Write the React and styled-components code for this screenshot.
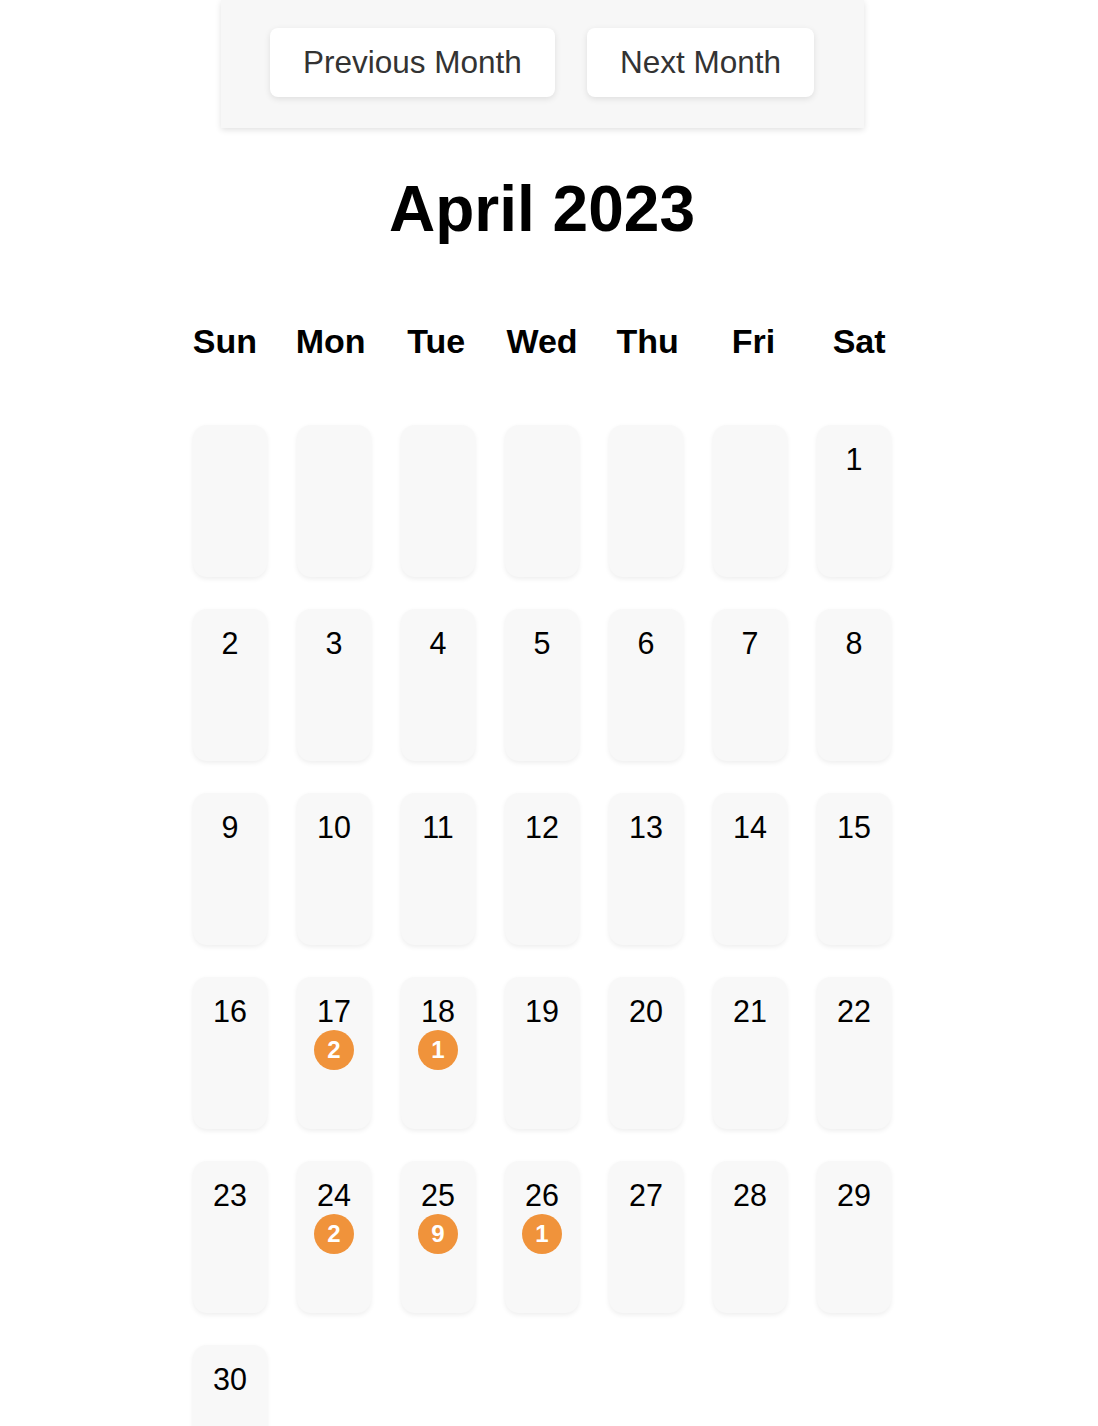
import React from "react";
import styled, { createGlobalStyle } from "styled-components";

const GlobalStyle = createGlobalStyle`
  html, body {
    margin: 0;
    padding: 0;
    background: #ffffff;
    font-family: "Liberation Sans", Arial, Helvetica, sans-serif;
    color: #000;
  }
`;

const WEEKDAYS = ["Sun", "Mon", "Tue", "Wed", "Thu", "Fri", "Sat"];
const START_OFFSET = 6;
const DAYS_IN_MONTH = 30;
const EVENTS = { 17: 2, 18: 1, 24: 2, 25: 9, 26: 1 };

const App = () => {
  const slots = [];
  for (let i = 0; i < START_OFFSET; i++) slots.push(null);
  for (let d = 1; d <= DAYS_IN_MONTH; d++) slots.push(d);

  return (
    <Page>
      <GlobalStyle />
      <Toolbar>
        <NavButton>Previous Month</NavButton>
        <NavButton>Next Month</NavButton>
      </Toolbar>
      <Title>April 2023</Title>
      <Weekdays>
        {WEEKDAYS.map((w) => (
          <Weekday key={w}>{w}</Weekday>
        ))}
      </Weekdays>
      <Grid>
        {slots.map((day, i) => (
          <Cell key={i}>
            {day && <DayNumber>{day}</DayNumber>}
            {day && EVENTS[day] && <Badge>{EVENTS[day]}</Badge>}
          </Cell>
        ))}
      </Grid>
    </Page>
  );
};

export default App;

const Page = styled.div`
  width: 1084px;
  display: flex;
  flex-direction: column;
  align-items: center;
  padding-bottom: 40px;
`;

const Toolbar = styled.div`
  width: 643px;
  box-sizing: border-box;
  height: 128px;
  padding-top: 28px;
  display: flex;
  justify-content: center;
  align-items: flex-start;
  gap: 32px;
  background: #f7f7f7;
  box-shadow: 0 2px 6px rgba(0, 0, 0, 0.12);
`;

const NavButton = styled.button`
  height: 69px;
  padding: 0 33px;
  border: none;
  border-radius: 8px;
  background: #ffffff;
  color: #333333;
  font-family: "Liberation Sans", Arial, Helvetica, sans-serif;
  font-size: 31.5px;
  box-shadow: 0 2px 6px rgba(0, 0, 0, 0.1);
  cursor: pointer;
`;

const Title = styled.h1`
  margin: 47px 0 0;
  font-size: 64px;
  line-height: 68px;
  font-weight: 700;
  text-align: center;
`;

const Weekdays = styled.div`
  margin-top: 78px;
  width: 740px;
  display: grid;
  grid-template-columns: repeat(7, 1fr);
`;

const Weekday = styled.div`
  text-align: center;
  font-size: 34px;
  font-weight: 700;
  line-height: 40px;
`;

const Grid = styled.div`
  margin-top: 64px;
  display: grid;
  grid-template-columns: repeat(7, 74px);
  grid-auto-rows: 152px;
  column-gap: 30px;
  row-gap: 32px;
`;

const Cell = styled.div`
  box-sizing: border-box;
  padding-top: 17px;
  display: flex;
  flex-direction: column;
  align-items: center;
  background: #f8f8f8;
  border-radius: 14px;
  box-shadow: 0 2px 5px rgba(0, 0, 0, 0.07);
`;

const DayNumber = styled.div`
  font-size: 30.5px;
  line-height: 34px;
  color: #000;
`;

const Badge = styled.div`
  margin-top: 2px;
  width: 40px;
  height: 40px;
  border-radius: 50%;
  background: #f0933b;
  color: #ffffff;
  font-size: 24px;
  font-weight: 700;
  display: flex;
  align-items: center;
  justify-content: center;
`;
